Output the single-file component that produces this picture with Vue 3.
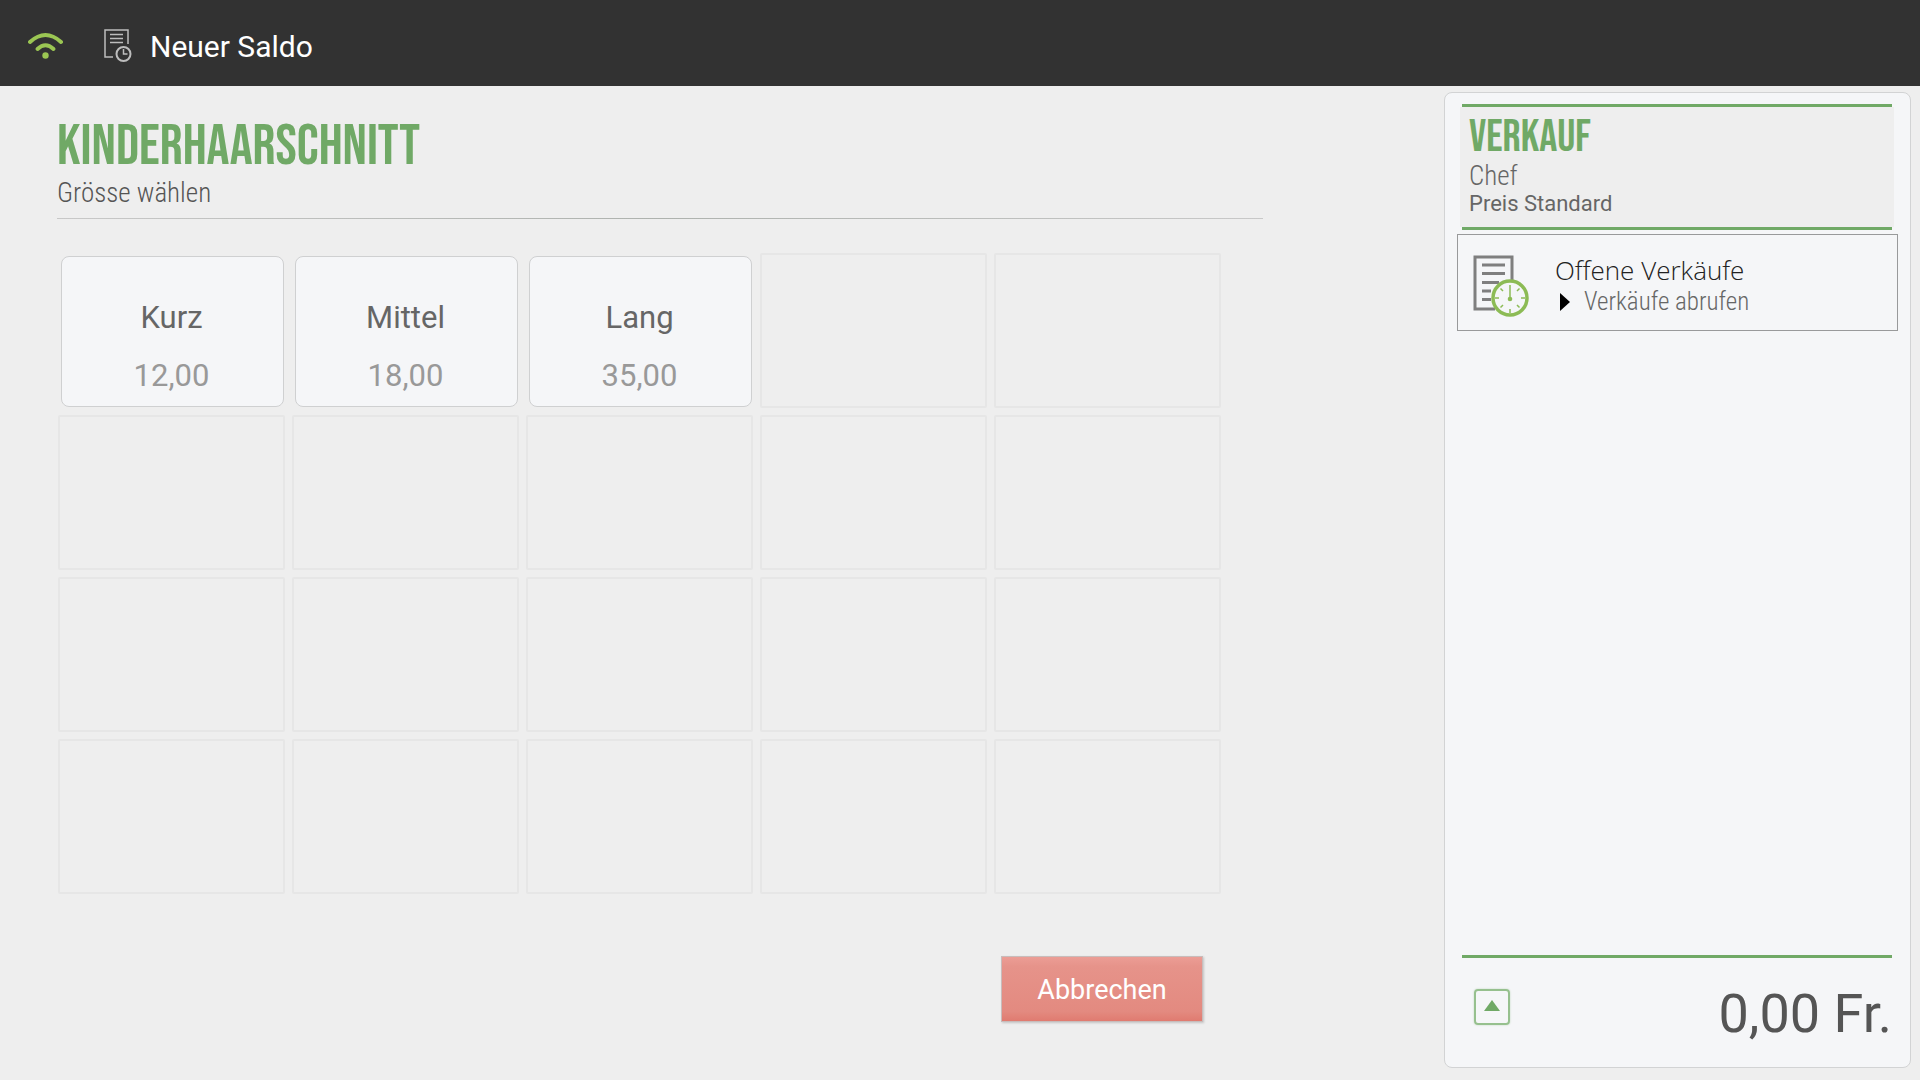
<template>
  <div class="page">
    <header class="topbar">
      <svg class="wifi" viewBox="0 0 36 28" role="img" aria-label="WLAN">
        <path d="M2 10 Q17.500 -4 33 10" />
        <path d="M9.500 17 Q17.500 9.500 25.500 17" />
        <circle cx="17.500" cy="23.500" r="3.200" />
      </svg>
      <svg class="receipt" viewBox="0 0 28 34" aria-hidden="true">
        <path d="M9 28H1V1H24V15" />
        <path d="M6 5.500H19M6 9.500H19M6 13.500H19" />
        <circle cx="19.500" cy="25" r="7" class="clock" />
        <path d="M19.500 20V25H23.500" />
      </svg>
      <span class="topbar-title">Neuer Saldo</span>
    </header>

    <div class="content">
      <main class="picker">
        <div class="heading">
          <h1>KINDERHAARSCHNITT</h1>
          <p>Grösse wählen</p>
        </div>
        <div class="grid">
          <template v-for="(tile, index) in tiles" :key="index">
            <button v-if="tile" type="button" class="tile filled" @click="select(tile)">
              <span>{{ tile.name }}</span>
              <span class="price">{{ tile.price }}</span>
            </button>
            <div v-else class="tile"></div>
          </template>
        </div>
        <button type="button" class="cancel" @click="selected = null">Abbrechen</button>
      </main>

      <aside class="sale">
        <div class="sale-head">
          <div class="sale-info">
            <h2>VERKAUF</h2>
            <p class="user">Chef</p>
            <p class="price-level">Preis Standard</p>
          </div>
        </div>
        <button type="button" class="open-sales">
          <svg class="open-icon" viewBox="0 0 56 62" aria-hidden="true">
            <path d="M22 54H2V2H39V25" class="sheet" />
            <path d="M9 10H32M9 18.500H32M9 27.500H26M9 36H18M9 44.500H18" class="sheet" />
            <circle cx="37" cy="43" r="17" class="dial" />
            <path d="M37 30V43M37 54V58M22 43H26M48 43H52M27.500 33.500L30 36M46.500 33.500L44 36M27.500 52.500L30 50M46.500 52.500L44 50" class="ticks" />
            <circle cx="37" cy="44" r="2.300" class="hub" />
          </svg>
          <span class="open-text">
            <span class="open-title">Offene Verkäufe</span>
            <span class="open-sub">
              <svg viewBox="0 0 10 18" class="arrow" aria-hidden="true"><path d="M0 0L10 9L0 18Z" /></svg>
              Verkäufe abrufen
            </span>
          </span>
        </button>
        <div class="total">
          <button type="button" class="expand" aria-label="Aufklappen">
            <svg viewBox="0 0 16 11" aria-hidden="true"><path d="M8 0L16 11H0Z" /></svg>
          </button>
          <span class="amount">{{ total }} Fr.</span>
        </div>
      </aside>
    </div>
  </div>
</template>

<script setup>
import { ref, computed } from 'vue'

const sizes = [
  { name: 'Kurz', price: '12,00' },
  { name: 'Mittel', price: '18,00' },
  { name: 'Lang', price: '35,00' }
]
const tiles = Array.from({ length: 20 }, (_, i) => sizes[i] || null)

const selected = ref(null)
const total = computed(() => selected.value ? selected.value.price : '0,00')

function select(tile) {
  selected.value = tile
}
</script>

<style>
body {
  background: #eeeeee;
}
</style>

<style scoped>
.page {
  display: flex;
  flex-direction: column;
  min-height: 100vh;
  font-family: Roboto, "Liberation Sans", sans-serif;
  color: #666666;
}
h1, h2, p {
  margin: 0;
  font-weight: normal;
}
button {
  font-family: inherit;
  color: inherit;
  padding: 0;
  cursor: pointer;
}
.topbar {
  display: flex;
  align-items: center;
  box-sizing: border-box;
  height: 86px;
  padding: 6px 28px 0;
  background: #323232;
}
.wifi {
  width: 36px;
  height: 28px;
  fill: none;
  stroke: #9bc653;
  stroke-width: 4;
  stroke-linecap: round;
}
.wifi circle {
  fill: #9bc653;
  stroke: none;
}
.receipt {
  width: 28px;
  height: 34px;
  margin: 0 18px 0 40px;
  fill: none;
  stroke: #bdbdbd;
  stroke-width: 1.5;
}
.receipt .clock {
  stroke-width: 2;
}
.topbar-title {
  font-size: 30px;
  color: #ffffff;
}
.content {
  display: flex;
  flex: 1;
}
.picker {
  display: flex;
  flex-direction: column;
  flex: 1;
  padding: 29px 181px 0 57px;
}
.heading {
  padding-bottom: 11px;
  border-bottom: 1px solid;
  border-image: linear-gradient(90deg, #c8c8c8, #aeb2ae 50%, #c8c8c8) 1;
}
.heading h1 {
  font-family: "Bebas Neue", "Open Sans Condensed", sans-serif;
  font-size: 57px;
  line-height: 64px;
  color: #70a966;
}
.heading p {
  font-family: "Roboto Condensed", "Open Sans Condensed Light", sans-serif;
  font-size: 27px;
  font-weight: 300;
  line-height: 28px;
  color: #555555;
}
.grid {
  display: grid;
  grid-template-columns: repeat(5, 1fr);
  grid-auto-rows: 155px;
  gap: 7px;
  margin: 34px 42px 0 1px;
}
.tile {
  border: 2px solid #e6e6e6;
  border-radius: 2px;
}
.filled {
  display: flex;
  flex-direction: column;
  align-items: center;
  justify-content: flex-end;
  gap: 18px;
  margin: 3px 1px 1px 3px;
  padding: 0 2px 10px 0;
  border: 1px solid #cfd0d1;
  border-radius: 8px;
  background: #f5f6f8;
  font-size: 31px;
  line-height: 40px;
}
.price {
  color: #999999;
}
.cancel {
  align-self: flex-end;
  width: 202px;
  height: 66px;
  margin: 62px 60px 0 0;
  padding-top: 2px;
  border: 1px solid #c8bcbb;
  background: linear-gradient(#eb9d95, #e6938a 15%, #e38a80 85%, #e07b70);
  box-shadow: 1px 1px 2px #c4c4c4;
  font-size: 27px;
  color: #ffffff;
}
.sale {
  display: flex;
  flex-direction: column;
  box-sizing: border-box;
  width: 467px;
  margin: 6px 9px 12px 0;
  padding: 11px 12px 0;
  border: 1px solid #d2d3d4;
  border-radius: 8px;
  background: #f5f6f8;
}
.sale-head {
  margin: 0 6px 0 5px;
  border-top: 3px solid #70a966;
  border-bottom: 3px solid #70a966;
}
.sale-info {
  margin: 0 -2px;
  padding: 6px 9px 8px;
  background: #eeeeee;
}
.sale-head h2 {
  font-family: "Bebas Neue", "Open Sans Condensed", sans-serif;
  font-size: 45px;
  line-height: 50px;
  color: #70a966;
}
.user {
  font-family: "Roboto Condensed", "Open Sans Condensed Light", sans-serif;
  font-size: 27px;
  font-weight: 300;
  line-height: 26px;
}
.price-level {
  font-size: 22px;
  line-height: 30px;
}
.open-sales {
  display: flex;
  gap: 26px;
  height: 97px;
  margin-top: 4px;
  padding: 20px 15px 0;
  border: 1px solid #999a9b;
  background: none;
  text-align: left;
}
.open-icon {
  width: 56px;
  height: 62px;
  fill: none;
}
.sheet {
  stroke: #7f7f7f;
  stroke-width: 3;
}
.dial {
  fill: #f5f6f8;
  stroke: #8cbb55;
  stroke-width: 3.500;
}
.ticks {
  stroke: #8cbb55;
  stroke-width: 1.500;
}
.hub {
  fill: #8cbb55;
}
.open-text {
  display: flex;
  flex-direction: column;
}
.open-title {
  font-family: "Open Sans", "Noto Sans", sans-serif;
  font-size: 26px;
  font-weight: 300;
  line-height: 30px;
  color: #222222;
}
.open-sub {
  display: flex;
  align-items: center;
  gap: 14px;
  padding-left: 5px;
  font-family: "Roboto Condensed", "Open Sans Condensed Light", sans-serif;
  font-size: 25px;
  font-weight: 300;
  line-height: 34px;
}
.arrow {
  width: 10px;
  height: 18px;
}
.total {
  display: flex;
  align-items: flex-start;
  justify-content: space-between;
  box-sizing: border-box;
  height: 112px;
  margin: auto 6px 0 5px;
  padding: 31px 0 0 12px;
  border-top: 3px solid #70a966;
}
.expand {
  display: flex;
  align-items: center;
  justify-content: center;
  width: 36px;
  height: 36px;
  border: 2px solid #96c08e;
  border-radius: 4px;
  background: none;
  box-shadow: 0 0 2px #bcd5b8;
}
.expand svg {
  width: 16px;
  height: 11px;
  margin-bottom: 4px;
  fill: #70a966;
}
.amount {
  font-size: 54px;
  line-height: 50px;
  color: #555555;
}
</style>
